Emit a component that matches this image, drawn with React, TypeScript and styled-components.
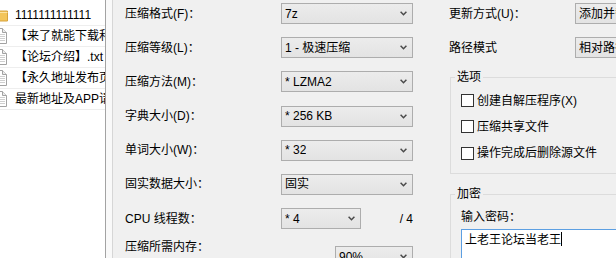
import React from "react";
import styled, { createGlobalStyle } from "styled-components";

type FileItem = {
  kind: "folder" | "doc";
  name: string;
};

const files: FileItem[] = [
  { kind: "folder", name: "1111111111111" },
  { kind: "doc", name: "【来了就能下载和谐版】.txt" },
  { kind: "doc", name: "【论坛介绍】.txt" },
  { kind: "doc", name: "【永久地址发布页】.txt" },
  { kind: "doc", name: "最新地址及APP请收藏.txt" },
];

const GlobalStyle = createGlobalStyle`
  html, body {
    margin: 0;
    padding: 0;
  }
  body {
    width: 616px;
    height: 258px;
    overflow: hidden;
    background: #f0f0f0;
    color: #000;
    font-family: "Liberation Sans", "Noto Sans CJK SC", sans-serif;
    font-size: 12px;
    line-height: 16px;
  }
`;

// 下拉框
const Select = ({ width, value }: { width: number; value: string }) => (
  <ComboBox $width={width}>
    <ComboText>{value}</ComboText>
    <svg width="7" height="5" viewBox="0 0 7 5">
      <path d="M0.6 0.8 L3.5 3.7 L6.4 0.8" fill="none" stroke="#4a4a4a" strokeWidth="1.5" />
    </svg>
  </ComboBox>
);

const FileIcon = ({ kind }: { kind: FileItem["kind"] }) =>
  kind === "folder" ? (
    <IconSvg width="16" height="16" viewBox="0 0 16 16">
      <path d="M0.5 2.5h5l1.5 1.5h8.5v10h-15z" fill="#f3c55a" stroke="#d6a23c" />
      <path d="M0.5 5.5h15" stroke="#fbe3a4" />
    </IconSvg>
  ) : (
    <IconSvg width="16" height="16" viewBox="0 0 16 16">
      <path d="M1.5 0.5h9l4 4v11h-13z" fill="#fff" stroke="#a2a2a2" />
      <path d="M10.5 0.5v4h4" fill="#ececec" stroke="#a2a2a2" />
      <path d="M3 6.5h10M3 8.5h10M3 10.5h10M3 12.5h10" stroke="#cfcfcf" />
    </IconSvg>
  );

const App = () => {
  return (
    <>
      <GlobalStyle />
      <Window>
        <FileList>
          {files.map((file) => (
            <FileRow key={file.name}>
              <FileIcon kind={file.kind} />
              <span>{file.name}</span>
            </FileRow>
          ))}
        </FileList>
        <Splitter />
        <Dialog>
          <MainColumn>
            <FieldRow>
              <Label>压缩格式(F)：</Label>
              <Select width={132} value="7z" />
            </FieldRow>
            <FieldRow>
              <Label>压缩等级(L)：</Label>
              <Select width={132} value="1 - 极速压缩" />
            </FieldRow>
            <FieldRow>
              <Label>压缩方法(M)：</Label>
              <Select width={132} value="* LZMA2" />
            </FieldRow>
            <FieldRow>
              <Label>字典大小(D)：</Label>
              <Select width={132} value="* 256 KB" />
            </FieldRow>
            <FieldRow>
              <Label>单词大小(W)：</Label>
              <Select width={132} value="* 32" />
            </FieldRow>
            <FieldRow>
              <Label>固实数据大小：</Label>
              <Select width={132} value="固实" />
            </FieldRow>
            <CpuRow>
              <Label>CPU 线程数：</Label>
              <Select width={80} value="* 4" />
              <ThreadTotal>/ 4</ThreadTotal>
            </CpuRow>
            <MemoryBlock>
              <MemoryText>
                <div>压缩所需内存：</div>
                <div>98 MB / 14336 MB / 16384 MB</div>
              </MemoryText>
              <MemorySlot>
                <Select width={78} value="90%" />
              </MemorySlot>
            </MemoryBlock>
          </MainColumn>

          <SideColumn>
            <SideRow>
              <Label>更新方式(U)：</Label>
              <Select width={90} value="添加并替换文件" />
            </SideRow>
            <SideRow>
              <Label>路径模式</Label>
              <Select width={90} value="相对路径" />
            </SideRow>

            <GroupBox $top={11}>
              <GroupTitle>选项</GroupTitle>
              <CheckList>
                <CheckRow>
                  <CheckBox />
                  <span>创建自解压程序(X)</span>
                </CheckRow>
                <CheckRow>
                  <CheckBox />
                  <span>压缩共享文件</span>
                </CheckRow>
                <CheckRow>
                  <CheckBox />
                  <span>操作完成后删除源文件</span>
                </CheckRow>
              </CheckList>
            </GroupBox>

            <GroupBox $top={12}>
              <GroupTitle>加密</GroupTitle>
              <PasswordLabel>输入密码：</PasswordLabel>
              <PasswordBox>
                上老王论坛当老王
                <Caret />
              </PasswordBox>
            </GroupBox>
          </SideColumn>
        </Dialog>
      </Window>
    </>
  );
};

export default App;

const Window = styled.div`
  display: flex;
  width: 616px;
  height: 258px;
  overflow: hidden;
`;

const FileList = styled.div`
  width: 106px;
  flex-shrink: 0;
  box-sizing: border-box;
  padding-top: 5px;
  background: #fff;
  border-right: 1px solid #a3a3a3;
  overflow: hidden;
`;

const FileRow = styled.div`
  display: flex;
  align-items: center;
  gap: 7px;
  height: 21px;
  box-sizing: border-box;
  border-bottom: 1px solid #eeeeee;
  white-space: nowrap;
`;

const IconSvg = styled.svg`
  flex-shrink: 0;
  margin-left: -8px;
`;

const Splitter = styled.div`
  width: 7px;
  flex-shrink: 0;
  box-sizing: border-box;
  background: #f9f9f9;
  border-right: 1px solid #d6d6d6;
`;

const Dialog = styled.div`
  flex: 1;
  min-width: 0;
  display: flex;
  gap: 36px;
  padding: 3px 0 0 12px;
  overflow: hidden;
`;

const MainColumn = styled.div`
  width: 288px;
  flex-shrink: 0;
  display: flex;
  flex-direction: column;
`;

const FieldRow = styled.div`
  display: grid;
  grid-template-columns: 156px auto;
  align-items: center;
  height: 21px;

  & + & {
    margin-top: 13.2px;
  }
`;

const CpuRow = styled(FieldRow)`
  grid-template-columns: 156px 80px 1fr;
  margin-top: 13.2px;
`;

const Label = styled.span`
  white-space: nowrap;
`;

const ThreadTotal = styled.span`
  justify-self: end;
`;

const ComboBox = styled.div<{ $width: number }>`
  width: ${(props) => props.$width}px;
  height: 21px;
  box-sizing: border-box;
  display: flex;
  align-items: center;
  justify-content: space-between;
  padding: 0 5px 0 3px;
  background: linear-gradient(#ececec, #e3e3e3);
  border: 1px solid #adadad;
  white-space: nowrap;
  overflow: hidden;
`;

const ComboText = styled.span`
  overflow: hidden;
`;

const MemoryBlock = styled.div`
  display: flex;
  align-items: flex-start;
  margin-top: 10px;
`;

const MemoryText = styled.div`
  width: 210px;
  white-space: nowrap;
`;

const MemorySlot = styled.div`
  padding-top: 7px;
`;

const SideColumn = styled.div`
  width: 200px;
  flex-shrink: 0;
  display: flex;
  flex-direction: column;
`;

const SideRow = styled.div`
  display: grid;
  grid-template-columns: 126px auto;
  align-items: center;
  height: 21px;

  & + & {
    margin-top: 13.2px;
  }
`;

const GroupBox = styled.fieldset<{ $top: number }>`
  margin: ${(props) => props.$top}px 0 0 1px;
  padding: 0 0 12px 10px;
  min-width: 0;
  border: 1px solid #dcdcdc;
`;

const GroupTitle = styled.legend`
  margin-left: -6px;
  padding: 0 2px;
  line-height: 16px;
`;

const CheckList = styled.div`
  display: flex;
  flex-direction: column;
  gap: 10.2px;
  padding-top: 7.5px;
`;

const CheckRow = styled.label`
  display: flex;
  align-items: center;
  gap: 3px;
  height: 16px;
  white-space: nowrap;
`;

const CheckBox = styled.span`
  width: 13px;
  height: 13px;
  box-sizing: border-box;
  flex-shrink: 0;
  background: #fff;
  border: 1px solid #333;
`;

const PasswordLabel = styled.div`
  margin-top: 6.7px;
`;

const PasswordBox = styled.div`
  margin-top: 4.3px;
  height: 34px;
  box-sizing: border-box;
  padding: 2px 3px;
  background: #fff;
  border: 1px solid #5c9fe2;
  white-space: nowrap;
`;

const Caret = styled.span`
  display: inline-block;
  width: 1px;
  height: 14px;
  vertical-align: -2px;
  background: #000;
`;
